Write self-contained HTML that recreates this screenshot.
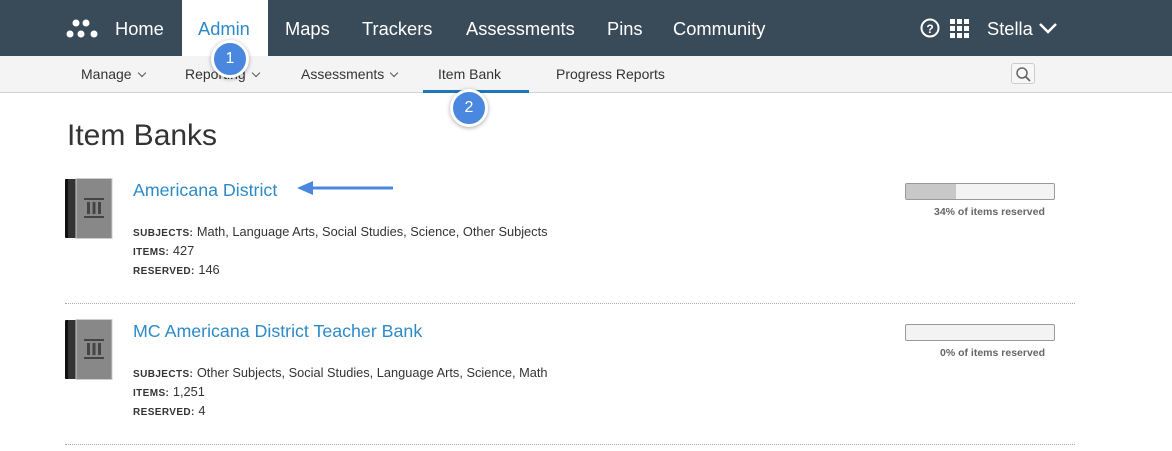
<!DOCTYPE html>
<html><head><style>
*{margin:0;padding:0;box-sizing:border-box}
body{width:1172px;height:451px;overflow:hidden;background:#fff;font-family:"Liberation Sans",sans-serif;position:relative}
.a{position:absolute;white-space:nowrap}
.top{position:absolute;left:0;top:0;width:1172px;height:56px;background:#394a58}
.nav{color:#fff;font-size:18.3px;top:18px}
.sub{position:absolute;left:0;top:56px;width:1172px;height:37px;background:#f4f4f4;border-bottom:1px solid #d2d2d2}
.sn{font-size:14px;color:#333;top:66px}
.chev{display:inline-block;width:6px;height:6px;border-right:1.5px solid #555;border-bottom:1.5px solid #555;transform:rotate(45deg);margin-left:7px;position:relative;top:-3px}
.badge{position:absolute;width:38px;height:38px;border-radius:50%;background:#4a88e0;border:3px solid #fff;box-shadow:0 1px 4px rgba(0,0,0,.35);color:#fff;font-size:16px;text-align:center;line-height:32px}
.title{font-size:17.8px;color:#2d8ac9}
.meta{font-size:12.8px;color:#333}
.meta b{font-size:10px;letter-spacing:.4px;color:#333}
.bar{position:absolute;width:150px;height:17px;border:1px solid #999;border-radius:2px;background:#f3f3f3;overflow:hidden}
.bar i{display:block;height:100%;background:#c8c8c8}
.pct{font-size:10.5px;font-weight:bold;color:#666}
.sep{position:absolute;left:65px;width:1010px;border-top:1px dotted #aaa}
</style></head><body>
<div class="top"></div>
<svg class="a" style="left:66px;top:18px" width="36" height="22" viewBox="0 0 36 22"><circle cx="10" cy="5" r="3.5" fill="#fff"/><circle cx="20" cy="5" r="3.5" fill="#fff"/><circle cx="4" cy="16" r="3.5" fill="#fff"/><circle cx="15" cy="16" r="3.5" fill="#fff"/><circle cx="28" cy="16" r="3.5" fill="#fff"/></svg>
<div class="a nav" style="left:115px">Home</div>
<div class="a" style="left:182px;top:0;width:86px;height:56px;background:#fff"></div>
<div class="a nav" style="left:198px;color:#2d8ac9">Admin</div>
<div class="a nav" style="left:285px">Maps</div>
<div class="a nav" style="left:362px">Trackers</div>
<div class="a nav" style="left:466px">Assessments</div>
<div class="a nav" style="left:607px">Pins</div>
<div class="a nav" style="left:673px">Community</div>
<svg class="a" style="left:920px;top:18px" width="20" height="20"><circle cx="10" cy="10" r="8.5" fill="none" stroke="#fff" stroke-width="2"/><text x="10" y="15" font-size="12" font-weight="bold" fill="#fff" text-anchor="middle" font-family="Liberation Sans">?</text></svg>
<svg class="a" style="left:950px;top:19px" width="20" height="20"><g fill="#fff"><rect x="0" y="0" width="5" height="5"/><rect x="7" y="0" width="5" height="5"/><rect x="14" y="0" width="5" height="5"/><rect x="0" y="7" width="5" height="5"/><rect x="7" y="7" width="5" height="5"/><rect x="14" y="7" width="5" height="5"/><rect x="0" y="14" width="5" height="5"/><rect x="7" y="14" width="5" height="5"/><rect x="14" y="14" width="5" height="5"/></g></svg>
<div class="a nav" style="left:987px">Stella</div>
<svg class="a" style="left:1038px;top:21px" width="20" height="14"><path d="M2 3 L10 11 L18 3" fill="none" stroke="#fff" stroke-width="2.5"/></svg>

<div class="sub"></div>
<div class="a sn" style="left:81px">Manage<span class="chev"></span></div>
<div class="a sn" style="left:185px">Reporting<span class="chev"></span></div>
<div class="a sn" style="left:301px">Assessments<span class="chev"></span></div>
<div class="a sn" style="left:438px">Item Bank</div>
<div class="a" style="left:423px;top:90px;width:106px;height:3px;background:#1e78b8"></div>
<div class="a sn" style="left:556px">Progress Reports</div>
<div class="a" style="left:1011px;top:63px;width:24px;height:21px;border:1px solid #ccc;border-radius:3px;background:#f7f7f7"></div>
<svg class="a" style="left:1015px;top:66px" width="17" height="16"><circle cx="7" cy="7" r="5" fill="none" stroke="#666" stroke-width="1.5"/><path d="M10.5 10.5 L15 15" stroke="#666" stroke-width="1.8"/></svg>

<div class="badge" style="left:211px;top:40px">1</div>
<div class="badge" style="left:450px;top:89px">2</div>

<div class="a" style="left:67px;top:119px;font-size:30px;color:#333;font-weight:300">Item Banks</div>

<!-- item 1 -->
<svg class="a" style="left:65px;top:178px" width="48" height="61"><rect x="0" y="1" width="12" height="59" rx="1" fill="#111"/><rect x="3" y="1" width="8" height="59" fill="#333"/><rect x="11" y="0.5" width="36" height="60" fill="#888" stroke="#ccc"/><g fill="#444"><rect x="19" y="20" width="20" height="2"/><rect x="22" y="24" width="3" height="12"/><rect x="27.5" y="24" width="3" height="12"/><rect x="33" y="24" width="3" height="12"/><rect x="19" y="38" width="20" height="2"/></g></svg>
<div class="a title" style="left:133px;top:180px">Americana District</div>
<svg class="a" style="left:295px;top:180px" width="100" height="16"><path d="M98 8 H14" stroke="#4a88e0" stroke-width="3"/><path d="M2 8 L18 1 L18 15 Z" fill="#4a88e0"/></svg>
<div class="a meta" style="left:133px;top:224px"><b>SUBJECTS:</b> Math, Language Arts, Social Studies, Science, Other Subjects</div>
<div class="a meta" style="left:133px;top:243px"><b>ITEMS:</b> 427</div>
<div class="a meta" style="left:133px;top:262px"><b>RESERVED:</b> 146</div>
<div class="bar" style="left:905px;top:183px"><i style="width:34%"></i></div>
<div class="a pct" style="left:934px;top:206px">34% of items reserved</div>
<div class="sep" style="top:303px"></div>

<!-- item 2 -->
<svg class="a" style="left:65px;top:319px" width="48" height="61"><rect x="0" y="1" width="12" height="59" rx="1" fill="#111"/><rect x="3" y="1" width="8" height="59" fill="#333"/><rect x="11" y="0.5" width="36" height="60" fill="#888" stroke="#ccc"/><g fill="#444"><rect x="19" y="20" width="20" height="2"/><rect x="22" y="24" width="3" height="12"/><rect x="27.5" y="24" width="3" height="12"/><rect x="33" y="24" width="3" height="12"/><rect x="19" y="38" width="20" height="2"/></g></svg>
<div class="a title" style="left:133px;top:321px">MC Americana District Teacher Bank</div>
<div class="a meta" style="left:133px;top:365px"><b>SUBJECTS:</b> Other Subjects, Social Studies, Language Arts, Science, Math</div>
<div class="a meta" style="left:133px;top:384px"><b>ITEMS:</b> 1,251</div>
<div class="a meta" style="left:133px;top:403px"><b>RESERVED:</b> 4</div>
<div class="bar" style="left:905px;top:324px"></div>
<div class="a pct" style="left:940px;top:347px">0% of items reserved</div>
<div class="sep" style="top:444px"></div>
</body></html>
